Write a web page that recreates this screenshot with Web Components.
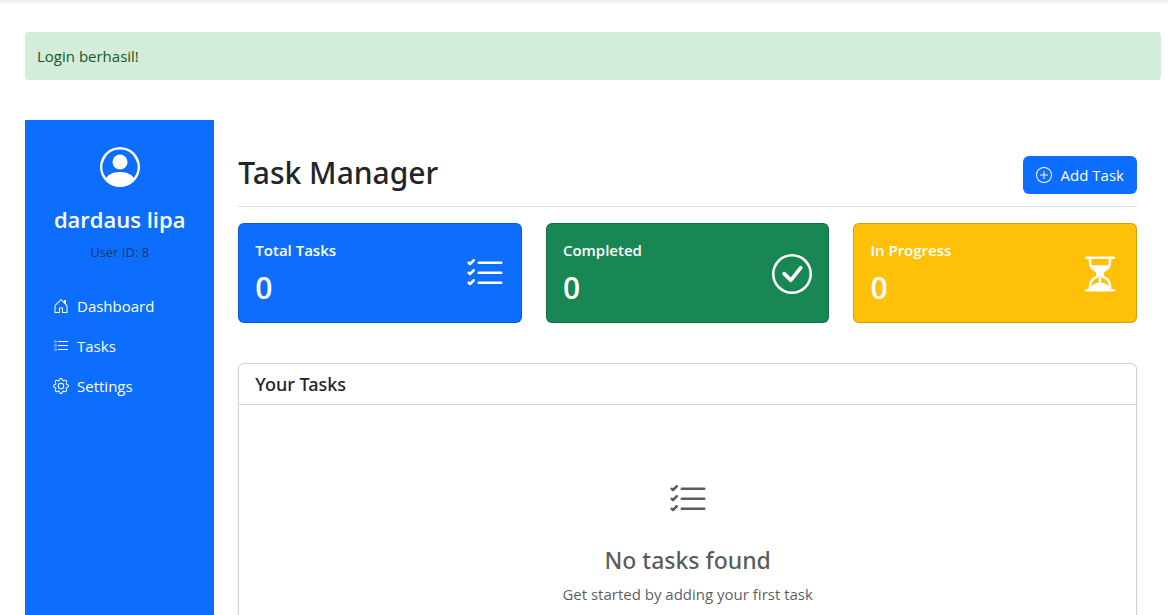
<!DOCTYPE html>
<html lang="id">
<head>
<meta charset="utf-8">
<meta name="viewport" content="width=device-width, initial-scale=1">
<title>Task Manager</title>
<style>
  :root {
    --blue: #0d6efd;
    --green: #198754;
    --yellow: #ffc107;
    --ink: #212529;
    --line: #dee2e6;
    --heading-font: "Noto Sans", "Open Sans", sans-serif;
  }
  body {
    margin: 0;
    background: #fff;
    color: var(--ink);
    font: 15px/24px "Open Sans", "Noto Sans", sans-serif;
  }
</style>
</head>
<body>
<task-app></task-app>

<script>
const ICONS = {
  person: '<path d="M11 6a3 3 0 1 1-6 0 3 3 0 0 1 6 0"/><path fill-rule="evenodd" d="M0 8a8 8 0 1 1 16 0A8 8 0 0 1 0 8m8-7a7 7 0 0 0-5.468 11.37C3.242 11.226 4.805 10 8 10s4.757 1.225 5.468 2.37A7 7 0 0 0 8 1"/>',
  house: '<path d="M8.354 1.146a.5.5 0 0 0-.708 0l-6 6A.5.5 0 0 0 1.5 7.5v7a.5.5 0 0 0 .5.5h4.5a.5.5 0 0 0 .5-.5v-4h2v4a.5.5 0 0 0 .5.5H14a.5.5 0 0 0 .5-.5v-7a.5.5 0 0 0-.146-.354L13 5.793V2.5a.5.5 0 0 0-.5-.5h-1a.5.5 0 0 0-.5.5v1.293zM2.5 14V7.707l5.5-5.5 5.5 5.5V14H10v-4a.5.5 0 0 0-.5-.5h-3a.5.5 0 0 0-.5.5v4z"/>',
  tasks: '<path fill-rule="evenodd" d="M2 2.5a.5.5 0 0 0-.5.5v1a.5.5 0 0 0 .5.5h1a.5.5 0 0 0 .5-.5V3a.5.5 0 0 0-.5-.5zM3 3H2v1h1z"/><path d="M5 3.5a.5.5 0 0 1 .5-.5h9a.5.5 0 0 1 0 1h-9a.5.5 0 0 1-.5-.5M5.500 7a.5.5 0 0 0 0 1h9a.5.5 0 0 0 0-1zm0 4a.5.5 0 0 0 0 1h9a.5.5 0 0 0 0-1z"/><path fill-rule="evenodd" d="M1.500 7a.5.5 0 0 1 .5-.5h1a.5.5 0 0 1 .5.5v1a.5.5 0 0 1-.5.5H2a.5.5 0 0 1-.5-.5zM2 7h1v1H2zm0 3.500a.5.5 0 0 0-.5.5v1a.5.5 0 0 0 .5.5h1a.5.5 0 0 0 .5-.5v-1a.5.5 0 0 0-.5-.5zm1 .5H2v1h1z"/>',
  gear: '<path d="M8 4.754a3.246 3.246 0 1 0 0 6.492 3.246 3.246 0 0 0 0-6.492M5.754 8a2.246 2.246 0 1 1 4.492 0 2.246 2.246 0 0 1-4.492 0"/><path d="M9.796 1.343c-.527-1.790-3.065-1.790-3.592 0l-.094.319a.873.873 0 0 1-1.255.520l-.292-.160c-1.640-.892-3.433.902-2.540 2.541l.159.292a.873.873 0 0 1-.520 1.255l-.319.094c-1.790.527-1.790 3.065 0 3.592l.319.094a.873.873 0 0 1 .520 1.255l-.160.292c-.892 1.640.901 3.434 2.541 2.540l.292-.159a.873.873 0 0 1 1.255.520l.094.319c.527 1.790 3.065 1.790 3.592 0l.094-.319a.873.873 0 0 1 1.255-.520l.292.160c1.640.893 3.434-.902 2.540-2.541l-.159-.292a.873.873 0 0 1 .520-1.255l.319-.094c1.790-.527 1.790-3.065 0-3.592l-.319-.094a.873.873 0 0 1-.520-1.255l.160-.292c.893-1.640-.902-3.433-2.541-2.540l-.292.159a.873.873 0 0 1-1.255-.520zm-2.633.283c.246-.835 1.428-.835 1.674 0l.094.319a1.873 1.873 0 0 0 2.693 1.115l.291-.160c.764-.415 1.600.420 1.184 1.185l-.159.292a1.873 1.873 0 0 0 1.116 2.692l.318.094c.835.246.835 1.428 0 1.674l-.319.094a1.873 1.873 0 0 0-1.115 2.693l.160.291c.415.764-.420 1.600-1.185 1.184l-.291-.159a1.873 1.873 0 0 0-2.693 1.116l-.094.318c-.246.835-1.428.835-1.674 0l-.094-.319a1.873 1.873 0 0 0-2.692-1.115l-.292.160c-.764.415-1.600-.420-1.184-1.185l.159-.291A1.873 1.873 0 0 0 1.945 8.930l-.319-.094c-.835-.246-.835-1.428 0-1.674l.319-.094A1.873 1.873 0 0 0 3.060 4.377l-.160-.292c-.415-.764.420-1.600 1.185-1.184l.292.159a1.873 1.873 0 0 0 2.692-1.115z"/>',
  checklist: '<path fill-rule="evenodd" d="M5 11.500a.5.5 0 0 1 .5-.5h9a.5.5 0 0 1 0 1h-9a.5.5 0 0 1-.5-.5m0-4a.5.5 0 0 1 .5-.5h9a.5.5 0 0 1 0 1h-9a.5.5 0 0 1-.5-.5m0-4a.5.5 0 0 1 .5-.5h9a.5.5 0 0 1 0 1h-9a.5.5 0 0 1-.5-.5M3.854 2.146a.5.5 0 0 1 0 .708l-1.500 1.500a.5.5 0 0 1-.708 0l-.5-.5a.5.5 0 1 1 .708-.708L2 3.293l1.146-1.147a.5.5 0 0 1 .708 0m0 4a.5.5 0 0 1 0 .708l-1.500 1.500a.5.5 0 0 1-.708 0l-.5-.5a.5.5 0 1 1 .708-.708L2 7.293l1.146-1.147a.5.5 0 0 1 .708 0m0 4a.5.5 0 0 1 0 .708l-1.500 1.500a.5.5 0 0 1-.708 0l-.5-.5a.5.5 0 0 1 .708-.708l.146.147 1.146-1.147a.5.5 0 0 1 .708 0"/>',
  check: '<path d="M8 15A7 7 0 1 1 8 1a7 7 0 0 1 0 14m0 1A8 8 0 1 0 8 0a8 8 0 0 0 0 16"/><path d="m10.970 4.970-.020.022-3.473 4.425-2.093-2.094a.75.75 0 0 0-1.060 1.060L6.970 11.030a.75.75 0 0 0 1.079-.020l3.992-4.990a.75.75 0 0 0-1.071-1.050"/>',
  hourglass: '<path d="M2.500 15a.5.5 0 1 1 0-1h1v-1a4.500 4.500 0 0 1 2.557-4.060c.290-.139.443-.377.443-.590v-.700c0-.213-.154-.451-.443-.590A4.500 4.500 0 0 1 3.500 3V2h-1a.5.5 0 0 1 0-1h11a.5.5 0 0 1 0 1h-1v1a4.500 4.500 0 0 1-2.557 4.060c-.290.139-.443.377-.443.590v.700c0 .213.154.451.443.590A4.500 4.500 0 0 1 12.500 13v1h1a.5.5 0 0 1 0 1zm2-13v1c0 .537.120 1.045.337 1.500h6.326c.216-.455.337-.963.337-1.500V2zm3 6.350c0 .701-.478 1.236-1.011 1.492A3.500 3.500 0 0 0 4.500 13s.866-1.299 3-1.480zm1 0v3.170c2.134.181 3 1.480 3 1.480a3.500 3.500 0 0 0-1.989-3.158C8.978 9.586 8.500 9.052 8.500 8.351z"/>',
  plus: '<path d="M8 15A7 7 0 1 1 8 1a7 7 0 0 1 0 14m0 1A8 8 0 1 0 8 0a8 8 0 0 0 0 16"/><path d="M8 4a.5.5 0 0 1 .5.5v3h3a.5.5 0 0 1 0 1h-3v3a.5.5 0 0 1-1 0v-3h-3a.5.5 0 0 1 0-1h3v-3A.5.5 0 0 1 8 4"/>'
};

/* Registers an element whose shadow root is filled from a template string. */
function define(name, render) {
  customElements.define(name, class extends HTMLElement {
    constructor() {
      super();
      this.attachShadow({ mode: 'open' });
    }
    connectedCallback() {
      const template = document.createElement('template');
      template.innerHTML = render(this);
      this.shadowRoot.replaceChildren(template.content.cloneNode(true));
    }
  });
}

define('app-icon', el => `
  <style>
    :host { display: block; flex: none; width: var(--icon-size, 16px); height: var(--icon-size, 16px); }
    svg { display: block; width: 100%; height: 100%; fill: currentColor; }
  </style>
  <svg viewBox="0 0 16 16" aria-hidden="true">${ICONS[el.getAttribute('name')]}</svg>`);

define('flash-message', () => `
  <style>
    :host { display: block; padding: 12px; border-radius: 4px; background: #d4edda; color: #155724; }
  </style>
  <div role="status"><slot></slot></div>`);

define('user-profile', el => `
  <style>
    :host { display: flex; flex-direction: column; align-items: center; text-align: center; }
    app-icon { --icon-size: 40px; }
    h2 { margin: 18px 0 8px; font-size: 22px; font-weight: 600; line-height: 29px; }
    p { margin: 0; color: rgba(33, 37, 41, .75); font-size: 13px; line-height: 20px; }
  </style>
  <app-icon name="person"></app-icon>
  <h2><slot></slot></h2>
  <p>User ID: ${el.getAttribute('user-id')}</p>`);

define('nav-item', el => `
  <style>
    :host { display: block; }
    a { display: flex; align-items: center; gap: 8px; padding: 8px 16px; color: #fff; text-decoration: none; }
  </style>
  <a href="${el.getAttribute('href')}"><app-icon name="${el.getAttribute('icon')}"></app-icon><span><slot></slot></span></a>`);

define('side-bar', () => `
  <style>
    :host { display: block; box-sizing: border-box; min-height: 100vh; padding: 27px 12px; background: var(--blue); color: #fff; }
    nav { margin-top: 24px; }
  </style>
  <user-profile user-id="8">dardaus lipa</user-profile>
  <nav>
    <nav-item href="#dashboard" icon="house">Dashboard</nav-item>
    <nav-item href="#tasks" icon="tasks">Tasks</nav-item>
    <nav-item href="#settings" icon="gear">Settings</nav-item>
  </nav>`);

define('page-heading', () => `
  <style>
    :host { display: flex; justify-content: space-between; align-items: flex-end; padding-bottom: 12px; border-bottom: 1px solid var(--line); }
    h1 { margin: 0; padding-bottom: 4px; font: 500 30px/34px var(--heading-font); }
    button { display: flex; align-items: center; gap: 9px; padding: 7px 13px; border: 0; border-radius: 6px; background: var(--blue); color: #fff; font: inherit; cursor: pointer; }
  </style>
  <h1><slot></slot></h1>
  <button type="button"><app-icon name="plus"></app-icon>Add Task</button>`);

define('stat-card', el => `
  <style>
    :host { display: flex; justify-content: space-between; align-items: center; box-sizing: border-box; padding: 17px 16px 15px; border: 1px solid rgba(0, 0, 0, .176); border-radius: 6px; color: #fff; }
    :host([tone="blue"]) { background: var(--blue); }
    :host([tone="green"]) { background: var(--green); }
    :host([tone="yellow"]) { background: var(--yellow); }
    h2 { margin: 0 0 10px; font-size: 15px; font-weight: 600; line-height: 18px; }
    p { margin: 0; font-size: 30px; font-weight: 600; line-height: 38px; }
    app-icon { --icon-size: 40px; }
  </style>
  <div><h2><slot></slot></h2><p>${el.getAttribute('value')}</p></div>
  <app-icon name="${el.getAttribute('icon')}"></app-icon>`);

define('task-panel', () => `
  <style>
    :host { display: block; border: 1px solid rgba(0, 0, 0, .176); border-radius: 6px; box-shadow: 0 2px 4px rgba(0, 0, 0, .075); }
    header { padding: 8px 16px; border-bottom: 1px solid rgba(0, 0, 0, .176); }
    h2 { margin: 0; font: 500 18px/24px var(--heading-font); }
  </style>
  <header><h2>Your Tasks</h2></header>
  <slot></slot>`);

define('empty-state', () => `
  <style>
    :host { display: flex; flex-direction: column; align-items: center; padding: 75px 16px 64px; color: rgba(33, 37, 41, .75); text-align: center; }
    app-icon { --icon-size: 40px; }
    h3 { margin: 26px 0 7px; font: 500 23px/29px var(--heading-font); }
    p { margin: 0; }
  </style>
  <app-icon name="checklist"></app-icon>
  <h3>No tasks found</h3>
  <p><slot></slot></p>`);

define('task-app', () => `
  <style>
    :host { display: block; }
    .edge { height: 5px; background: linear-gradient(#ebebeb, #fff); }
    .page { padding: 27px 7px 0 25px; }
    .columns { display: grid; grid-template-columns: minmax(0, 1fr) minmax(0, 5fr); margin-top: 40px; }
    main { padding: 36px 24px 24px; }
    .stats { display: grid; grid-template-columns: repeat(3, minmax(0, 1fr)); gap: 24px; margin: 16px 0 40px; }
  </style>
  <div class="edge"></div>
  <div class="page">
    <flash-message>Login berhasil!</flash-message>
    <div class="columns">
      <side-bar></side-bar>
      <main>
        <page-heading>Task Manager</page-heading>
        <section class="stats">
          <stat-card tone="blue" icon="checklist" value="0">Total Tasks</stat-card>
          <stat-card tone="green" icon="check" value="0">Completed</stat-card>
          <stat-card tone="yellow" icon="hourglass" value="0">In Progress</stat-card>
        </section>
        <task-panel><empty-state>Get started by adding your first task</empty-state></task-panel>
      </main>
    </div>
  </div>`);
</script>
</body>
</html>
